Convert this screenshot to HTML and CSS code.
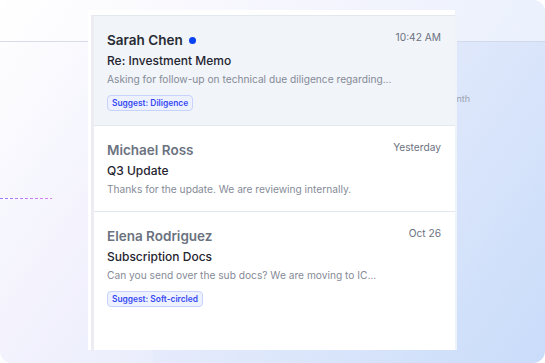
FILE: index.html
```html
<!DOCTYPE html>
<html lang="en">
<head>
  <meta charset="UTF-8">
  <meta name="viewport" content="width=device-width, initial-scale=1.0">
  <title>Inbox</title>
  <link rel="stylesheet" href="styles.css">
</head>
<body>
  <div class="frame">
    <div class="backdrop">
      <div class="bd-header"></div>
      <div class="bd-body">
        <div class="bd-side">
          <span class="bd-dash"></span>
        </div>
        <div class="bd-main">
          <span class="bd-note">Last month</span>
        </div>
      </div>
    </div>

    <section class="inbox">
      <div class="list">
        <div class="item selected">
          <div class="item-top">
            <span class="name">Sarah Chen <span class="dot"></span></span>
            <span class="time">10:42 AM</span>
          </div>
          <div class="subject">Re: Investment Memo</div>
          <div class="preview">Asking for follow-up on technical due diligence regarding...</div>
          <span class="tag">Suggest: Diligence</span>
        </div>

        <div class="item read">
          <div class="item-top">
            <span class="name">Michael Ross</span>
            <span class="time">Yesterday</span>
          </div>
          <div class="subject">Q3 Update</div>
          <div class="preview">Thanks for the update. We are reviewing internally.</div>
        </div>

        <div class="item read last">
          <div class="item-top">
            <span class="name">Elena Rodriguez</span>
            <span class="time">Oct 26</span>
          </div>
          <div class="subject">Subscription Docs</div>
          <div class="preview">Can you send over the sub docs? We are moving to IC...</div>
          <span class="tag">Suggest: Soft-circled</span>
        </div>
      </div>
    </section>
  </div>
</body>
</html>
```

FILE: styles.css
```css
body {
  margin: 0;
  background: #fff;
  font-family: Inter, "Noto Sans", sans-serif;
}
.frame {
  position: relative;
  width: 545px;
  height: 363px;
  border-radius: 12px;
  overflow: hidden;
  background: linear-gradient(125deg, #ffffff 0%, #efeefd 35%, #dfe8fb 62%, #c9dcfa 100%);
}
.backdrop {
  display: flex;
  flex-direction: column;
  height: 100%;
}
.bd-header {
  height: 41px;
  flex-shrink: 0;
  background: rgba(255, 255, 255, 0.45);
  border-bottom: 1px solid rgba(203, 212, 232, 0.8);
}
.bd-body {
  flex: 1;
  display: flex;
}
.bd-side {
  width: 153px;
  background: rgba(255, 255, 255, 0.18);
  padding-top: 156px;
  box-sizing: border-box;
}
.bd-dash {
  display: block;
  width: 52px;
  height: 1px;
  background:
    repeating-linear-gradient(90deg, transparent 0 3px, #fff 3px 5px),
    linear-gradient(90deg, #9a7cf6, #e07cf2);
}
.bd-main {
  flex: 1;
  display: flex;
  justify-content: flex-end;
  align-items: flex-start;
  padding: 51px 75px 0 0;
}
.bd-note {
  font-size: 9px;
  color: #9aa1ad;
}
.inbox {
  position: absolute;
  left: 88px;
  top: 10px;
  width: 369px;
  height: 340px;
  box-sizing: border-box;
  padding: 5px 0 0 3px;
  background: #fff;
  border-right: 2px solid #eef2f9;
}
.list {
  height: 100%;
  border-left: 3px solid #ececf2;
  border-top: 1px solid #e3e7ee;
}
.item {
  padding: 14px 14px 14px 13px;
  border-bottom: 1px solid #e3e7ee;
}
.item.last {
  border-bottom: none;
}
.item.selected {
  background: #f1f4f9;
}
.item-top {
  display: flex;
  justify-content: space-between;
  align-items: flex-start;
}
.name {
  font-size: 13.5px;
  line-height: 20px;
  font-weight: 600;
  color: #272b34;
  display: flex;
  align-items: center;
  gap: 6px;
}
.read .name {
  color: #6b7280;
}
.dot {
  width: 7px;
  height: 7px;
  border-radius: 50%;
  background: #0b43f2;
}
.time {
  font-size: 10.2px;
  line-height: 14px;
  color: #6b7280;
}
.subject {
  margin-top: 2px;
  font-size: 12px;
  line-height: 18px;
  font-weight: 500;
  color: #1f2430;
}
.preview {
  margin-top: 1px;
  font-size: 10.2px;
  line-height: 16px;
  color: #858b97;
}
.tag {
  display: inline-block;
  margin-top: 8px;
  height: 16px;
  line-height: 14px;
  box-sizing: border-box;
  padding: 0 4px;
  font-size: 8.4px;
  font-weight: 600;
  color: #3649f3;
  background: #eef2ff;
  border: 1px solid #c7d2fe;
  border-radius: 4px;
  vertical-align: top;
}
```
